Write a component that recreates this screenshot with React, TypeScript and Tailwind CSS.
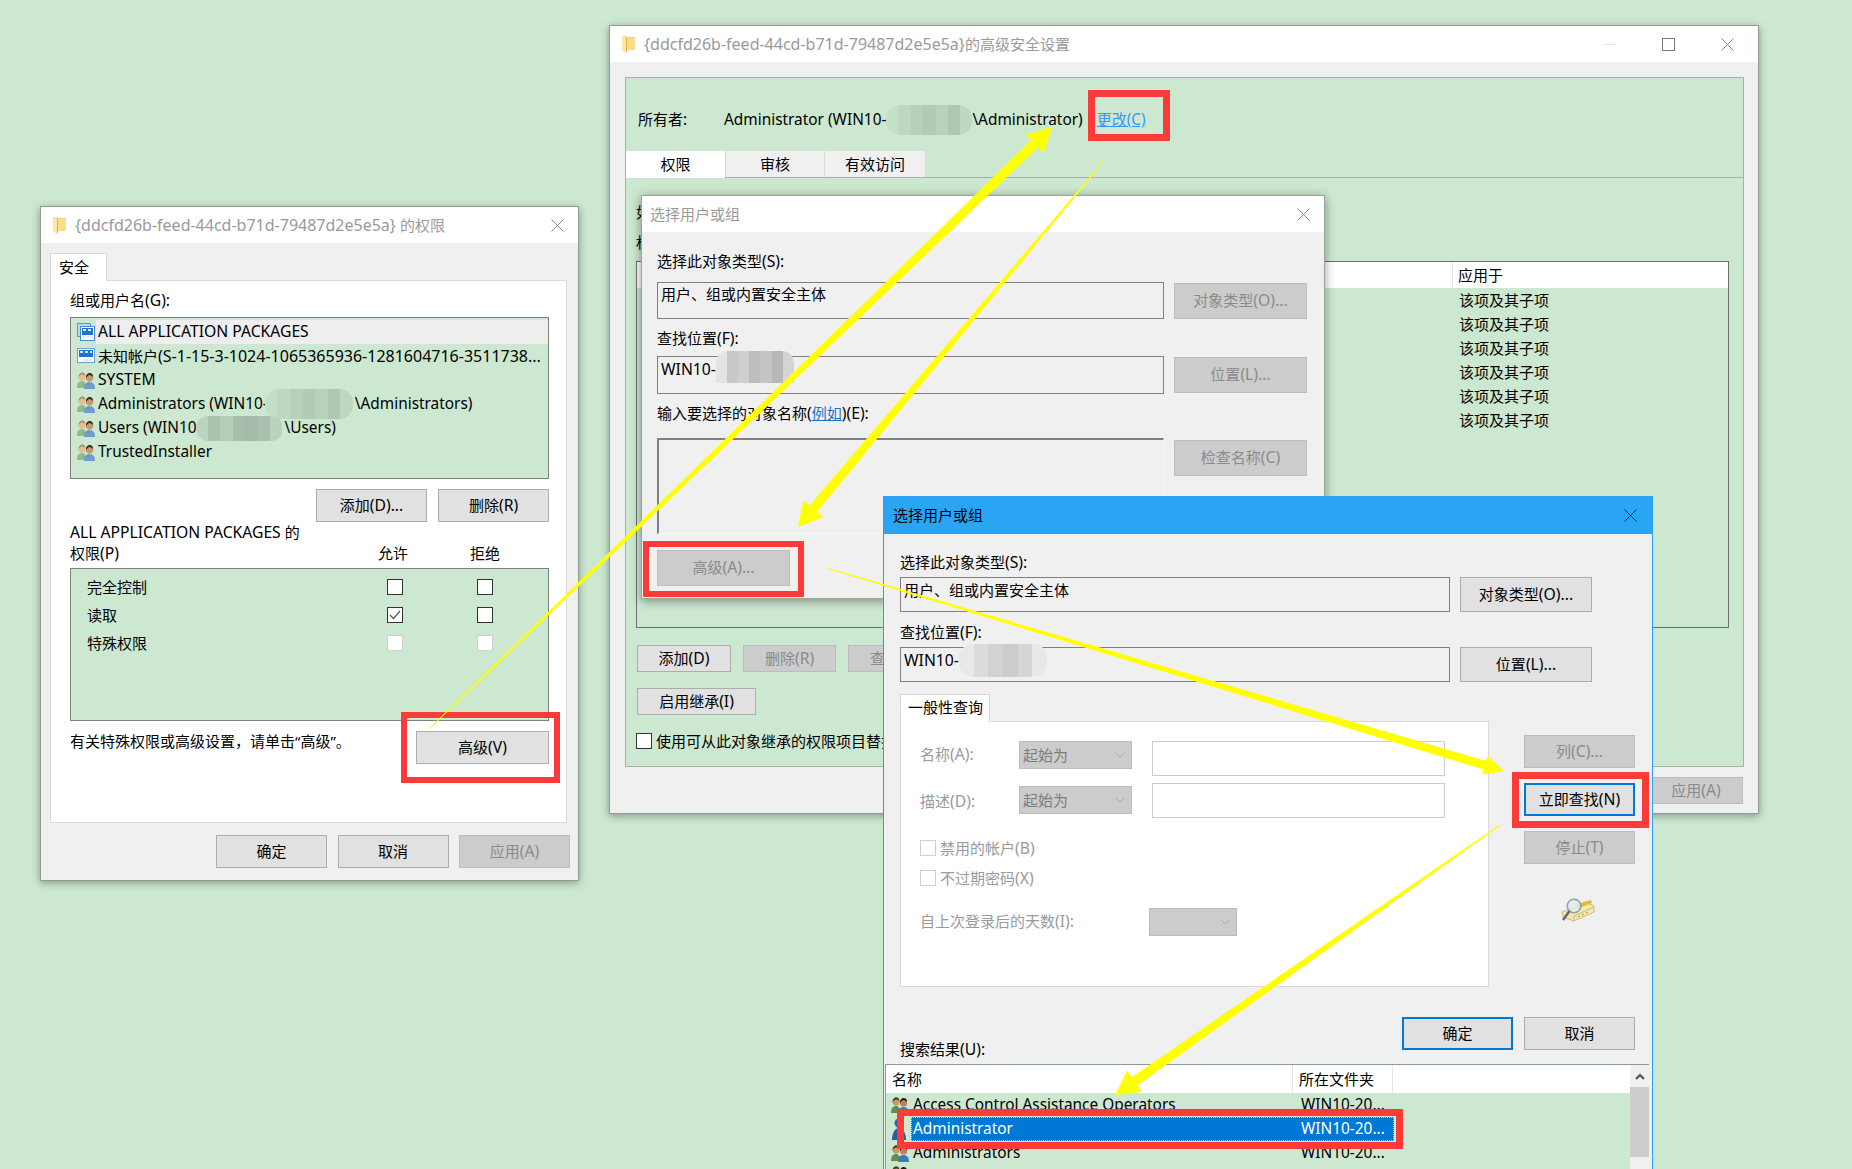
import type { ReactNode } from "react";
import clsx from "clsx";

// the screenshot's latin glyphs run a bit wider than the CJK ones at the same size
function T({ children, title, narrow }: { children: string; title?: boolean; narrow?: boolean }) {
  const parts = children.split(/([\x20-\x7e]+)/).filter(Boolean);
  return (
    <>
      {parts.map((p, i) =>
        /^[\x20-\x7e]+$/.test(p) ? (
          <span key={i} className={title ? "text-[16px]" : narrow ? "text-[15.4px]" : "text-[15.7px]"}>
            {p}
          </span>
        ) : (
          <span key={i}>{p}</span>
        ),
      )}
    </>
  );
}

function FolderIcon() {
  return (
    <svg width="13" height="17" viewBox="0 0 13 17" className="shrink-0">
      <path d="M0 0h4l1 1h8v13H1L0 13z" fill="#f5d56e" />
      <path d="M5 2h8v12H5z" fill="#fbdf86" />
      <path d="M0 0l4 1v16l-3-2-1-2z" fill="#fbe9a8" />
      <path d="M4 1l1 1v13l-1 2z" fill="#e0b040" />
    </svg>
  );
}

function CloseIcon({ className }: { className?: string }) {
  return (
    <svg width="13" height="13" viewBox="0 0 13 13" className={clsx("shrink-0", className)}>
      <path d="M.5.5l12 12M12.5.5l-12 12" stroke="currentColor" strokeWidth="1" fill="none" />
    </svg>
  );
}

function UsersIcon({ dark }: { dark?: boolean }) {
  return (
    <svg width="18" height="19" viewBox="0 0 18 19" className="shrink-0">
      <path d="M0 17c0-5 2-7 5-7s4 2 4 7z" fill={dark ? "#5f8f48" : "#8fbb7c"} />
      <circle cx="5" cy="6" r="3.6" fill={dark ? "#c49a62" : "#e0c092"} />
      <path d="M1.5 6c0-6 7-6 7-1L6 3.5 3.5 4z" fill={dark ? "#4f3f1f" : "#b09a68"} />
      <path d="M7 18c0-5 2-7 5.5-7S18 13 18 18z" fill={dark ? "#3f78b8" : "#6f9ccc"} />
      <circle cx="12.5" cy="7" r="3.6" fill={dark ? "#b98458" : "#c99a72"} />
      <path d="M9 7c-.5-6.500 7.500-6.500 7-1l-3-2-2 .5z" fill={dark ? "#201a14" : "#2e2a28"} />
    </svg>
  );
}

function AppIcon({ boxed }: { boxed?: boolean }) {
  if (boxed) {
    return (
      <svg width="18" height="18" viewBox="0 0 18 18" className="shrink-0">
        <rect x=".5" y=".5" width="13" height="13" fill="#bcd8f0" stroke="#5a9ad6" />
        <rect x="3.500" y="3.500" width="14" height="14" fill="#fff" stroke="#4a8ecf" />
        <rect x="5" y="5" width="11" height="7" fill="#1f74cf" />
        <path d="M6 6h3v2H6zM11 6h3v2h-3zM6 13h2v2H6zM10 13h2v2h-2zM14 13h2v2h-2z" fill="#d9e9f8" />
      </svg>
    );
  }
  return (
    <svg width="18" height="16" viewBox="0 0 18 16" className="shrink-0">
      <rect x=".5" y=".5" width="17" height="14" fill="#fff" stroke="#6c9fd2" />
      <rect x="2" y="2" width="14" height="7" fill="#1f74cf" />
      <path d="M3 3h3v2H3zM8 3h3v2H8zM13 3h2v2h-2zM6 11h2v2H6zM9 11h2v2H9zM12 11h2v2h-2z" fill="#cfe3f6" />
    </svg>
  );
}

function BlueUserIcon() {
  return (
    <svg width="16" height="24" viewBox="0 0 16 24" className="shrink-0">
      <circle cx="8" cy="6" r="4.5" fill="#2f62a8" />
      <path d="M1 23c0-7 3-12 7-12s7 5 7 12z" fill="#2a5aa0" />
    </svg>
  );
}

function FinderIcon() {
  return (
    <svg width="34" height="24" viewBox="0 0 34 24" className="shrink-0">
      <path d="M1 14L26 5l7 3v6L13 23l-11-4z" fill="#f4e8ac" stroke="#bda95f" strokeWidth=".7" />
      <path d="M16 6l14-4 1 3-13 5z" fill="#e6bb2e" />
      <path d="M13 23v-5L33 9" fill="none" stroke="#bda95f" strokeWidth=".7" />
      <path d="M17 19l2-1M21 17l2-1M25 15l2-1" stroke="#a89652" strokeWidth="1" />
      <circle cx="13" cy="8" r="6.800" fill="#e3eaea" fillOpacity=".85" stroke="#8ea2ae" strokeWidth="1.500" />
      <path d="M8.500 13L2 22" stroke="#666" strokeWidth="2.400" />
    </svg>
  );
}

function Chevron() {
  return (
    <svg width="10" height="6" viewBox="0 0 10 6" className="shrink-0">
      <path d="M.5.5L5 5 9.500.5" stroke="#a8a8a8" fill="none" />
    </svg>
  );
}

function Btn({
  className,
  disabled,
  focus,
  children,
}: {
  className?: string;
  disabled?: boolean;
  focus?: boolean;
  children: string;
}) {
  return (
    <div
      className={clsx(
        "flex shrink-0 items-center justify-center",
        disabled && "border border-[#bdbdbd] bg-[#cccccc] text-[#8a8a8a]",
        focus && "border-2 border-[#0078d7] bg-[#e1e1e1] text-black",
        !disabled && !focus && "border border-[#adadad] bg-[#e1e1e1] text-black",
        className,
      )}
    >
      <span>
        <T>{children}</T>
      </span>
    </div>
  );
}

function Check({ checked, disabled, className }: { checked?: boolean; disabled?: boolean; className?: string }) {
  return (
    <div
      className={clsx(
        "flex h-4 w-4 shrink-0 items-center justify-center border bg-white",
        disabled ? "border-[#cfcfcf]" : "border-[#333333]",
        className,
      )}
    >
      {checked && (
        <svg width="12" height="10" viewBox="0 0 12 10">
          <path d="M1 5l3.500 3.500L11 1" stroke="#555" strokeWidth="1.200" fill="none" />
        </svg>
      )}
    </div>
  );
}

// pixelated blur that hides the machine name
function Mosaic({ className, cells }: { className?: string; cells: string[] }) {
  return (
    <div className={clsx("flex shrink-0 overflow-hidden", className)}>
      {cells.map((c, i) => (
        <div key={i} className={clsx("flex-1", c)} />
      ))}
    </div>
  );
}

const greenCells = ["bg-[#c3dfc8]", "bg-[#bcd8c1]", "bg-[#b6d1bb]", "bg-[#b0cab5]", "bg-[#b8d3bd]", "bg-[#aec8b3]", "bg-[#bcd8c1]"];
const greenCellsDark = ["bg-[#bbd6c0]", "bg-[#abc4b0]", "bg-[#b3cdb8]", "bg-[#a6beab]", "bg-[#a4bba9]", "bg-[#a9c1ae]", "bg-[#b9d3be]"];
const grayCells = ["bg-[#e4e4e4]", "bg-[#c8c8c8]", "bg-[#cfcfcf]", "bg-[#bdbdbd]", "bg-[#c4c4c4]", "bg-[#b8b8b8]", "bg-[#d4d4d4]"];
const paleCells = ["bg-[#e8e8e8]", "bg-[#dcdcdc]", "bg-[#d2d2d2]", "bg-[#cccccc]", "bg-[#d6d6d6]", "bg-[#e8e8e8]"];

function PermissionsWindow() {
  return (
    <div className="absolute left-[40px] top-[206px] flex h-[675px] w-[539px] flex-col border border-[#8f9c92] bg-[#f0f0f0] shadow-[0_2px_8px_rgba(0,0,0,0.35)]">
      <div className="relative flex h-9 shrink-0 items-center bg-white pl-[12px] text-[#9a9a9a]">
        <FolderIcon />
        <span className="ml-[9px] whitespace-pre">
          <T title>{"{ddcfd26b-feed-44cd-b71d-79487d2e5e5a} 的权限"}</T>
        </span>
        <CloseIcon className="ml-auto mr-[14px] text-[#888888]" />
      </div>

      <div className="px-[9px] pt-[10px]">
        <div className="relative z-10 -mb-px flex h-[28px] w-[57px] items-center border border-b-0 border-[#d9d9d9] bg-white pl-[8px]">安全</div>
        <div className="flex h-[543px] w-[517px] flex-col border border-[#d9d9d9] bg-white pl-[19px] pr-[17px] pt-[9px]">
          <div className="leading-5">
            <T>组或用户名(G):</T>
          </div>

          <div className="mt-[7px] flex h-[162px] w-[479px] shrink-0 flex-col border border-[#7f7f7f] bg-[#cde8d0] pt-[2px]">
            <div className="flex h-6 items-center pl-[6px]">
              <AppIcon boxed />
              <div className="ml-[1px] flex h-6 flex-1 items-center bg-[#eeeeee] pl-[2px] pr-1">
                <T>ALL APPLICATION PACKAGES</T>
              </div>
            </div>
            <div className="flex h-6 items-center gap-[3px] pl-[6px]">
              <AppIcon />
              <span className="whitespace-nowrap">
                <T title>未知帐户(S-1-15-3-1024-1065365936-1281604716-3511738...</T>
              </span>
            </div>
            <div className="flex h-6 items-center gap-[3px] pl-[6px]">
              <UsersIcon />
              <span className="whitespace-nowrap">
                <T>SYSTEM</T>
              </span>
            </div>
            <div className="flex h-6 items-center gap-[3px] pl-[6px]">
              <UsersIcon />
              <span className="whitespace-nowrap">
                <T narrow>Administrators (WIN10-</T>
              </span>
              <Mosaic className="relative z-10 -mx-[6px] -my-[3px] h-[30px] w-[88px] rounded-[14px]" cells={greenCells} />
              <span className="whitespace-nowrap pl-[5px]">
                <T narrow>\Administrators)</T>
              </span>
            </div>
            <div className="flex h-6 items-center gap-[3px] pl-[6px]">
              <UsersIcon />
              <span className="whitespace-nowrap">
                <T narrow>Users (WIN10</T>
              </span>
              <Mosaic className="relative z-10 -my-[2px] -ml-[4px] h-[25px] w-[87px] rounded-[12px]" cells={greenCellsDark} />
              <span className="-ml-[1px] whitespace-nowrap">
                <T narrow>\Users)</T>
              </span>
            </div>
            <div className="flex h-6 items-center gap-[3px] pl-[6px]">
              <UsersIcon />
              <span className="whitespace-nowrap">
                <T narrow>TrustedInstaller</T>
              </span>
            </div>
          </div>

          <div className="mt-[10px] flex shrink-0 justify-end gap-[11px]">
            <Btn className="h-[33px] w-[111px]">添加(D)...</Btn>
            <Btn className="h-[33px] w-[111px]">删除(R)</Btn>
          </div>

          <div className="leading-[21px]">
            <T>ALL APPLICATION PACKAGES 的</T>
          </div>
          <div className="grid grid-cols-[308px_92px_auto] leading-[21px]">
            <span>
              <T>权限(P)</T>
            </span>
            <span>允许</span>
            <span>拒绝</span>
          </div>

          <div className="mt-[4px] h-[153px] w-[479px] shrink-0 border border-[#7f7f7f] bg-[#cde8d0] pt-[4px]">
            {[
              { name: "完全控制" },
              { name: "读取", checked: true },
              { name: "特殊权限", disabled: true },
            ].map((p) => (
              <div key={p.name} className="grid h-7 grid-cols-[316px_90px_auto] items-center">
                <span className="pl-4">{p.name}</span>
                <Check checked={p.checked} disabled={p.disabled} />
                <Check disabled={p.disabled} />
              </div>
            ))}
          </div>

          <div className="mt-[10px] flex items-start justify-between">
            <span className="leading-5">有关特殊权限或高级设置，请单击“高级”。</span>
            <Btn className="h-[33px] w-[133px]">高级(V)</Btn>
          </div>
        </div>
      </div>

      <div className="mt-[12px] flex justify-end gap-[10.5px] pr-[8px]">
        <Btn className="h-[33px] w-[111px]">确定</Btn>
        <Btn className="h-[33px] w-[111px]">取消</Btn>
        <Btn disabled className="h-[33px] w-[111px]">应用(A)</Btn>
      </div>
    </div>
  );
}

function AdvancedWindow() {
  return (
    <div className="absolute left-[609px] top-[25px] flex h-[789px] w-[1150px] flex-col border border-[#8f9c92] bg-[#f0f0f0] shadow-[0_2px_8px_rgba(0,0,0,0.35)]">
      <div className="flex h-9 shrink-0 items-center bg-white pl-[12px] text-[#9a9a9a]">
        <FolderIcon />
        <span className="ml-[9px] whitespace-pre">
          <T title>{"{ddcfd26b-feed-44cd-b71d-79487d2e5e5a}的高级安全设置"}</T>
        </span>
        <div className="ml-auto mr-[46px] h-px w-[12px] bg-[#e5e5e5]" />
        <div className="mr-[46px] h-[13px] w-[13px] border border-[#777777]" />
        <CloseIcon className="mr-[24px] text-[#888888]" />
      </div>

      <div className="ml-[15px] mr-[14px] mt-[15px] flex h-[690px] shrink-0 flex-col border border-[#adadad] bg-[#cde8d0]">
        <div className="mt-[30px] flex h-6 items-center pl-[12px]">
          <span className="w-[86px]">
            <T narrow>所有者:</T>
          </span>
          <span className="whitespace-nowrap">
            <T narrow>Administrator (WIN10-</T>
          </span>
          <Mosaic className="-my-[3px] h-[30px] w-[86px] rounded-[14px]" cells={greenCells} />
          <span className="whitespace-nowrap">
            <T narrow>\Administrator)</T>
          </span>
          <span className="ml-[14px] whitespace-nowrap text-[#3399ff] underline">
            <T narrow>更改(C)</T>
          </span>
        </div>

        <div className="mt-[19px] flex h-[27px] shrink-0 border-b border-[#adadad]">
          <div className="-mb-px flex h-[27px] w-[99px] items-center justify-center bg-white">权限</div>
          <div className="flex w-[100px] items-center justify-center border-l border-r border-[#d9d9d9] bg-[#f0f0f0]">审核</div>
          <div className="flex w-[100px] items-center justify-center bg-[#f0f0f0]">有效访问</div>
        </div>

        <div className="ml-[10px] mt-[24px] leading-5">如需其他信息，请双击权限项目。若要修改权限项目，请选择该项目并单击“编辑”。</div>
        <div className="ml-[10px] mt-[10px] leading-5">权限条目:</div>

        <div className="ml-[10px] mt-[9px] h-[367px] w-[1093px] shrink-0 border border-[#6e6e6e]">
          <div className="flex h-[26px] bg-white">
            <div className="w-[816px] border-r border-[#e5e5e5]" />
            <div className="flex items-center pl-[5px]">应用于</div>
          </div>
          {[0, 1, 2, 3, 4, 5].map((i) => (
            <div key={i} className="flex h-6 items-center pl-[822px]">该项及其子项</div>
          ))}
        </div>

        <div className="ml-[11px] mt-[17px] flex gap-[12px]">
          <Btn className="h-[27px] w-[94px]">添加(D)</Btn>
          <Btn disabled className="h-[27px] w-[93px]">删除(R)</Btn>
          <Btn disabled className="h-[27px] w-[93px]">查看(V)</Btn>
        </div>
        <Btn className="ml-[11px] mt-[16px] h-[27px] w-[119px]">启用继承(I)</Btn>
        <div className="ml-[10px] mt-[18px] flex items-center gap-1">
          <Check />
          <span className="leading-4">使用可从此对象继承的权限项目替换所有子对象的权限项目</span>
        </div>
      </div>

      <div className="mt-[10px] flex justify-end gap-[10px] pr-[15px]">
        <Btn className="h-[27px] w-[94px]">确定</Btn>
        <Btn className="h-[27px] w-[94px]">取消</Btn>
        <Btn disabled className="h-[27px] w-[94px]">应用(A)</Btn>
      </div>
    </div>
  );
}

function InactiveDialog() {
  return (
    <div className="absolute left-[641px] top-[195px] flex h-[404px] w-[684px] flex-col border border-[#9aa59c] bg-[#f0f0f0] shadow-[0_2px_10px_rgba(0,0,0,0.4)]">
      <div className="flex h-9 shrink-0 items-center bg-white pl-2 text-[#9a9a9a]">
        <span>选择用户或组</span>
        <CloseIcon className="ml-auto mr-[14px] text-[#888888]" />
      </div>
      <div className="pl-[15px] pt-[19px]">
        <div className="leading-5">
          <T>选择此对象类型(S):</T>
        </div>
        <div className="mt-[11px] flex items-start gap-[10px]">
          <div className="h-[37px] w-[507px] border border-[#7f7f7f] px-[3px] pt-[1px] leading-5">用户、组或内置安全主体</div>
          <Btn disabled className="mt-[1px] h-[36px] w-[133px]">对象类型(O)...</Btn>
        </div>
        <div className="mt-[9px] leading-5">
          <T>查找位置(F):</T>
        </div>
        <div className="mt-[8px] flex items-start gap-[10px]">
          <div className="flex h-[38px] w-[507px] items-start border border-[#7f7f7f] pl-[3px] pt-[2px]">
            <span className="leading-5">
              <T>WIN10-</T>
            </span>
            <Mosaic className="-mt-[8px] h-[32px] w-[78px] rounded-t-[12px]" cells={grayCells} />
          </div>
          <Btn disabled className="mt-[1px] h-[36px] w-[133px]">位置(L)...</Btn>
        </div>
        <div className="mt-[9px] leading-5">
          <T>输入要选择的对象名称(</T>
          <span className="text-[#1a73c9] underline">例如</span>
          <T>)(E):</T>
        </div>
        <div className="mt-[15px] flex items-start gap-[10px]">
          <div className="h-[96px] w-[507px] border-b border-l-2 border-r border-t-2 border-[#7f7f7f] border-b-[#f8f8f8] border-r-[#f8f8f8]" />
          <Btn disabled className="mt-[2px] h-[36px] w-[133px]">检查名称(C)</Btn>
        </div>
        <Btn disabled className="mt-[16px] h-[36px] w-[133px]">高级(A)...</Btn>
      </div>
    </div>
  );
}

function Dropdown({ className, label }: { className?: string; label?: string }) {
  return (
    <div className={clsx("flex h-[28px] shrink-0 items-center justify-between border border-[#bdbdbd] bg-[#cccccc] pl-[3px] pr-[6px] text-[#7d7d7d]", className)}>
      <span>{label}</span>
      <Chevron />
    </div>
  );
}

function ActiveDialog() {
  const results = [
    { dark: true, name: "Access Control Assistance Operators", folder: "WIN10-20..." },
    { name: "Administrator", folder: "WIN10-20...", selected: true },
    { dark: true, name: "Administrators", folder: "WIN10-20..." },
  ];
  return (
    <div className="absolute left-[883px] top-[496px] flex h-[673px] w-[770px] flex-col border border-b-0 border-[#2a9fee] bg-[#f0f0f0]">
      <div className="flex h-[37px] shrink-0 items-center bg-[#2aa5f3] pl-[9px] text-black">
        <span>选择用户或组</span>
        <CloseIcon className="ml-auto mr-[15px] text-[#10233a]" />
      </div>

      <div className="pl-[16px] pt-[18px]">
        <div className="leading-5">
          <T>选择此对象类型(S):</T>
        </div>
        <div className="mt-[5px] flex items-start gap-[10px]">
          <div className="h-[35px] w-[550px] border border-[#7f7f7f] px-[3px] pt-[2px] leading-5">用户、组或内置安全主体</div>
          <Btn className="h-[35px] w-[132px]">对象类型(O)...</Btn>
        </div>
        <div className="mt-[10px] leading-5">
          <T>查找位置(F):</T>
        </div>
        <div className="mt-[5px] flex items-start gap-[10px]">
          <div className="flex h-[35px] w-[550px] items-start border border-[#7f7f7f] pl-[3px] pt-[2px]">
            <span className="leading-5">
              <T>WIN10-</T>
            </span>
            <Mosaic className="-mt-[6px] h-[33px] w-[88px] rounded-[14px]" cells={paleCells} />
          </div>
          <Btn className="h-[35px] w-[132px]">位置(L)...</Btn>
        </div>

        <div className="mt-[12px] flex items-start gap-[35px]">
          <div>
            <div className="relative z-10 -mb-px flex h-[28px] w-[90px] items-center border border-b-0 border-[#d9d9d9] bg-white pb-[2px] pl-[7px]">一般性查询</div>
            <div className="flex h-[266px] w-[589px] flex-col border border-[#d9d9d9] bg-white pl-[19px] pt-[19px] text-[#9a9a9a]">
              <div className="flex items-start">
                <span className="w-[99px] leading-[26px]">
                  <T>名称(A):</T>
                </span>
                <Dropdown className="w-[113px]" label="起始为" />
                <div className="ml-[20px] h-[35px] w-[293px] border border-[#cccccc]" />
              </div>
              <div className="mt-[7px] flex items-start">
                <span className="mt-[5px] w-[99px] leading-[26px]">
                  <T>描述(D):</T>
                </span>
                <Dropdown className="mt-[3px] w-[113px]" label="起始为" />
                <div className="ml-[20px] h-[35px] w-[293px] border border-[#cccccc]" />
              </div>
              <div className="mt-[22px] flex items-center gap-[4px]">
                <Check disabled />
                <span className="leading-4">
                  <T>禁用的帐户(B)</T>
                </span>
              </div>
              <div className="mt-[14px] flex items-center gap-[4px]">
                <Check disabled />
                <span className="leading-4">
                  <T>不过期密码(X)</T>
                </span>
              </div>
              <div className="mt-[22px] flex items-center">
                <span className="w-[229px]">
                  <T>自上次登录后的天数(I):</T>
                </span>
                <Dropdown className="w-[88px]" />
              </div>
            </div>
          </div>

          <div className="flex w-[111px] flex-col items-center gap-[15px] pt-[41px]">
            <Btn disabled className="h-[33px] w-[111px]">列(C)...</Btn>
            <Btn focus className="h-[33px] w-[111px]">立即查找(N)</Btn>
            <Btn disabled className="h-[33px] w-[111px]">停止(T)</Btn>
            <div className="-ml-[4px] mt-[19px]">
              <FinderIcon />
            </div>
          </div>
        </div>
      </div>

      <div className="mt-[30px] flex h-[47px] shrink-0 justify-between pl-[16px] pr-[17px]">
        <span className="mt-[22px] leading-5">
          <T>搜索结果(U):</T>
        </span>
        <div className="flex gap-[11px]">
          <Btn focus className="h-[33px] w-[111px]">确定</Btn>
          <Btn className="h-[33px] w-[111px]">取消</Btn>
        </div>
      </div>

      <div className="ml-[1px] mr-[3px] flex min-h-0 flex-1 overflow-hidden border-l border-t border-[#8a9a96] bg-[#cde8d0]">
        <div className="min-w-0 flex-1">
          <div className="flex h-[28px] bg-white">
            <div className="flex w-[407px] items-center border-r border-[#e5e5e5] pl-[6px]">名称</div>
            <div className="flex w-[100px] items-center border-r border-[#e5e5e5] pl-[6px]">所在文件夹</div>
          </div>
          {results.map((r) => (
            <div key={r.name} className="flex h-6 items-center pl-[5px]">
              <div className="flex w-[20px] justify-start">{r.selected ? <BlueUserIcon /> : <UsersIcon dark />}</div>
              <div className={clsx("flex h-6 w-[483px] items-center pl-[2px]", r.selected && "bg-[#0078d7] text-white outline-1 -outline-offset-1 outline-dotted outline-[#9cc9ee]")}>
                <span className="w-[388px]">
                  <T narrow>{r.name}</T>
                </span>
                <span>
                  <T narrow>{r.folder}</T>
                </span>
              </div>
            </div>
          ))}
          <div className="pl-[5px]">
            <UsersIcon dark />
          </div>
        </div>
        <div className="flex w-[19px] shrink-0 flex-col bg-[#f0f0f0]">
          <div className="flex h-[22px] items-center justify-center">
            <svg width="10" height="7" viewBox="0 0 10 7">
              <path d="M1 6l4-4 4 4" stroke="#505050" strokeWidth="2" fill="none" />
            </svg>
          </div>
          <div className="h-[70px] bg-[#cdcdcd]" />
        </div>
      </div>
    </div>
  );
}

// wedge arrow, thin at the tail and widest at the neck
function arrowPoints(x1: number, y1: number, x2: number, y2: number, neck: number, headLen: number, headHalf: number) {
  const len = Math.hypot(x2 - x1, y2 - y1);
  const ux = (x2 - x1) / len;
  const uy = (y2 - y1) / len;
  const px = -uy;
  const py = ux;
  const nx = x2 - ux * headLen;
  const ny = y2 - uy * headLen;
  const pts = [
    [x1 + px * 0.5, y1 + py * 0.5],
    [nx + (px * neck) / 2, ny + (py * neck) / 2],
    [nx + px * headHalf, ny + py * headHalf],
    [x2, y2],
    [nx - px * headHalf, ny - py * headHalf],
    [nx - (px * neck) / 2, ny - (py * neck) / 2],
    [x1 - px * 0.5, y1 - py * 0.5],
  ];
  return pts.map((p) => p.join(",")).join(" ");
}

function Annotations() {
  return (
    <>
      <div className="absolute left-[401px] top-[712px] h-[71px] w-[159px] border-[6px] border-[#fb3a3a]" />
      <div className="absolute left-[1088px] top-[90px] h-[51px] w-[82px] border-[7px] border-[#fb3a3a]" />
      <div className="absolute left-[643px] top-[541px] h-[56px] w-[161px] border-[6px] border-[#fb3a3a]" />
      <div className="absolute left-[1512px] top-[772px] h-[56px] w-[137px] border-[7px] border-[#fb3a3a]" />
      <div className="absolute left-[897px] top-[1109px] h-[40px] w-[506px] border-[7px] border-[#fb3a3a]" />
      <svg width="1852" height="1169" className="pointer-events-none absolute left-0 top-0">
        <polygon points={arrowPoints(429, 729, 1052, 127, 10, 24, 13)} fill="#ffff00" />
        <polygon points={arrowPoints(1103, 162, 798, 527, 10, 24, 13)} fill="#ffff00" />
        <polygon points={arrowPoints(827, 568, 1504, 771, 9, 20, 10)} fill="#ffff00" />
        <polygon points={arrowPoints(1500, 825, 1115, 1095, 10, 24, 13)} fill="#ffff00" />
      </svg>
    </>
  );
}

export default function App() {
  return (
    <div className="relative h-[1169px] w-[1852px] overflow-hidden bg-[#cde8d0] font-['Noto_Sans','Noto_Sans_CJK_SC',sans-serif] text-[15px] text-black">
      <PermissionsWindow />
      <AdvancedWindow />
      <InactiveDialog />
      <ActiveDialog />
      <Annotations />
    </div>
  );
}
